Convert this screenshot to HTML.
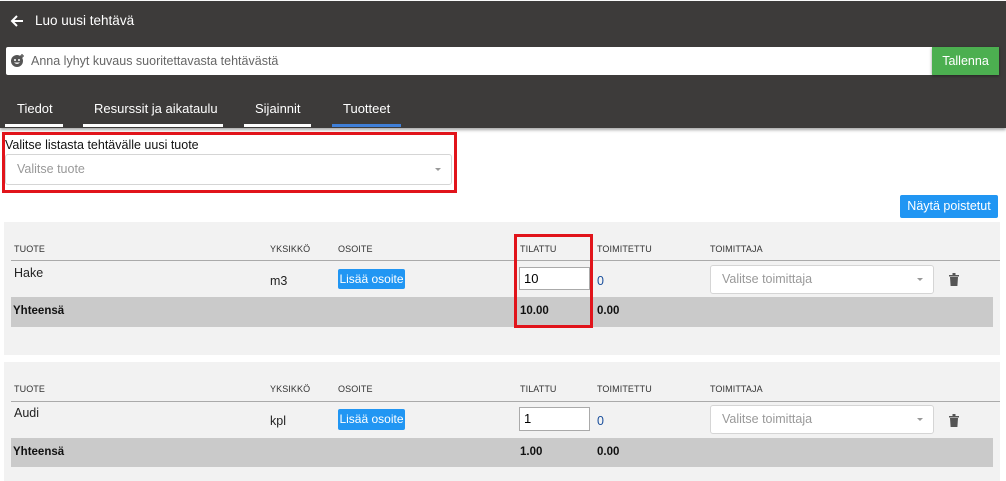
<!DOCTYPE html>
<html><head><meta charset="utf-8"><style>
*{box-sizing:border-box;margin:0;padding:0}
body{width:1006px;height:481px;position:relative;overflow:hidden;background:#fff;font-family:"Liberation Sans",sans-serif;color:#222}
.a{position:absolute}
.hdr{left:0;top:1px;width:1006px;height:127px;background:#3d3b3a;box-shadow:0 2px 3px rgba(0,0,0,.35)}
.tab{color:#fff;font-size:13px;top:101px}
.ul{height:3px;top:124px;background:#fff}
.th{font-size:9px;color:#333;letter-spacing:.1px}
.panel{left:4px;width:996px;background:#f2f2f2}
.btn{background:#2196f3;color:#fff;font-size:12px;border-radius:2px;text-align:center}
.sel{background:#fff;border:1px solid #d5d5d5;border-radius:3px;color:#999;font-size:12.5px;padding-left:11px}
.caret{position:absolute;right:10px;top:50%;margin-top:-2px;border-left:3px solid transparent;border-right:3px solid transparent;border-top:3px solid #999}
.inp{background:#fff;border:1px solid #aaa;font-size:13px;color:#000;padding-left:4px}
.tot{background:#cacaca;left:11px;width:982px}
.b{font-weight:bold;font-size:11.5px;color:#111}
.txt{font-size:12.5px}
.red{border:3px solid #e1141b}
</style></head><body>
<div class="a hdr"></div>
<svg class="a" style="left:9px;top:13px" width="16" height="16" viewBox="0 0 16 16"><path d="M14 8H3M8 3L3 8l5 5" stroke="#fff" stroke-width="2" fill="none"/></svg>
<div class="a" style="left:35px;top:13px;color:#fff;font-size:13.5px">Luo uusi tehtävä</div>
<div class="a" style="left:6px;top:47px;width:926px;height:28px;background:#fff;border-radius:2px 0 0 2px"></div>
<svg class="a" style="left:10px;top:53px" width="15" height="15" viewBox="0 0 15 15"><circle cx="7" cy="8" r="6" fill="#555"/><circle cx="5" cy="7" r="1" fill="#fff"/><circle cx="9" cy="7" r="1" fill="#fff"/><path d="M4 9.5q3 3 6 0" fill="#fff"/><path d="M12 1v4M10 3h4" stroke="#555" stroke-width="1.3"/></svg>
<div class="a" style="left:31px;top:54px;color:#666;font-size:12.5px">Anna lyhyt kuvaus suoritettavasta tehtävästä</div>
<div class="a" style="left:932px;top:47px;width:67px;height:28px;background:#4caf50;color:#fff;font-size:12.5px;text-align:center;line-height:28px;box-shadow:0 1px 3px rgba(0,0,0,.4)">Tallenna</div>
<div class="a tab" style="left:17px">Tiedot</div>
<div class="a tab" style="left:94px">Resurssit ja aikataulu</div>
<div class="a tab" style="left:255px">Sijainnit</div>
<div class="a tab" style="left:343px">Tuotteet</div>
<div class="a ul" style="left:5px;width:58px"></div>
<div class="a ul" style="left:83px;width:140px"></div>
<div class="a ul" style="left:244px;width:67px"></div>
<div class="a ul" style="left:332px;width:69px;background:#3f7fd8"></div>

<div class="a red" style="left:2px;top:132px;width:455px;height:61px"></div>
<div class="a" style="left:5px;top:138px;font-size:12.5px;color:#111">Valitse listasta tehtävälle uusi tuote</div>
<div class="a sel" style="left:5px;top:154px;width:447px;height:31px;line-height:29px">Valitse tuote<span class="caret"></span></div>

<div class="a btn" style="left:900px;top:195px;width:98px;height:23px;line-height:23px;font-size:12.5px">Näytä poistetut</div>

<div class="a panel" style="top:222px;height:133px"></div>
<div class="a th" style="left:14px;top:244px">TUOTE</div>
<div class="a th" style="left:270px;top:244px">YKSIKKÖ</div>
<div class="a th" style="left:338px;top:244px">OSOITE</div>
<div class="a th" style="left:520px;top:244px">TILATTU</div>
<div class="a th" style="left:597px;top:244px">TOIMITETTU</div>
<div class="a th" style="left:710px;top:244px">TOIMITTAJA</div>
<div class="a" style="left:11px;top:260px;width:989px;height:1px;background:#aaa"></div>
<div class="a txt" style="left:14px;top:266px">Hake</div>
<div class="a txt" style="left:270px;top:274px">m3</div>
<div class="a btn" style="left:338px;top:269px;width:67px;height:20px;line-height:20px">Lisää osoite</div>
<div class="a inp" style="left:519px;top:267px;width:71px;height:23px;line-height:21px">10</div>
<div class="a txt" style="left:597px;top:274px;color:#1a4f9c">0</div>
<div class="a sel" style="left:710px;top:265px;width:224px;height:29px;line-height:27px">Valitse toimittaja<span class="caret"></span></div>
<svg class="a" style="left:949px;top:273px" width="10" height="13" viewBox="0 0 10 13"><path d="M0 2h10v1.5H0zM3.5 0h3v2h-3zM1 4h8l-.6 9H1.6z" fill="#555"/></svg>
<div class="a tot" style="top:297px;height:30px"></div>
<div class="a b" style="left:13px;top:305px">Yhteensä</div>
<div class="a b" style="left:520px;top:305px">10.00</div>
<div class="a b" style="left:597px;top:305px">0.00</div>
<div class="a red" style="left:514px;top:234px;width:79px;height:94px"></div>

<div class="a panel" style="top:362px;height:119px"></div>
<div class="a th" style="left:14px;top:384px">TUOTE</div>
<div class="a th" style="left:270px;top:384px">YKSIKKÖ</div>
<div class="a th" style="left:338px;top:384px">OSOITE</div>
<div class="a th" style="left:520px;top:384px">TILATTU</div>
<div class="a th" style="left:597px;top:384px">TOIMITETTU</div>
<div class="a th" style="left:710px;top:384px">TOIMITTAJA</div>
<div class="a" style="left:11px;top:401px;width:989px;height:1px;background:#aaa"></div>
<div class="a txt" style="left:14px;top:406px">Audi</div>
<div class="a txt" style="left:270px;top:414px">kpl</div>
<div class="a btn" style="left:338px;top:409px;width:67px;height:21px;line-height:21px">Lisää osoite</div>
<div class="a inp" style="left:519px;top:407px;width:71px;height:24px;line-height:22px">1</div>
<div class="a txt" style="left:597px;top:414px;color:#1a4f9c">0</div>
<div class="a sel" style="left:710px;top:405px;width:224px;height:29px;line-height:27px">Valitse toimittaja<span class="caret"></span></div>
<svg class="a" style="left:949px;top:414px" width="10" height="13" viewBox="0 0 10 13"><path d="M0 2h10v1.5H0zM3.5 0h3v2h-3zM1 4h8l-.6 9H1.6z" fill="#555"/></svg>
<div class="a tot" style="top:438px;height:29px"></div>
<div class="a b" style="left:13px;top:446px">Yhteensä</div>
<div class="a b" style="left:520px;top:446px">1.00</div>
<div class="a b" style="left:597px;top:446px">0.00</div>
</body></html>
